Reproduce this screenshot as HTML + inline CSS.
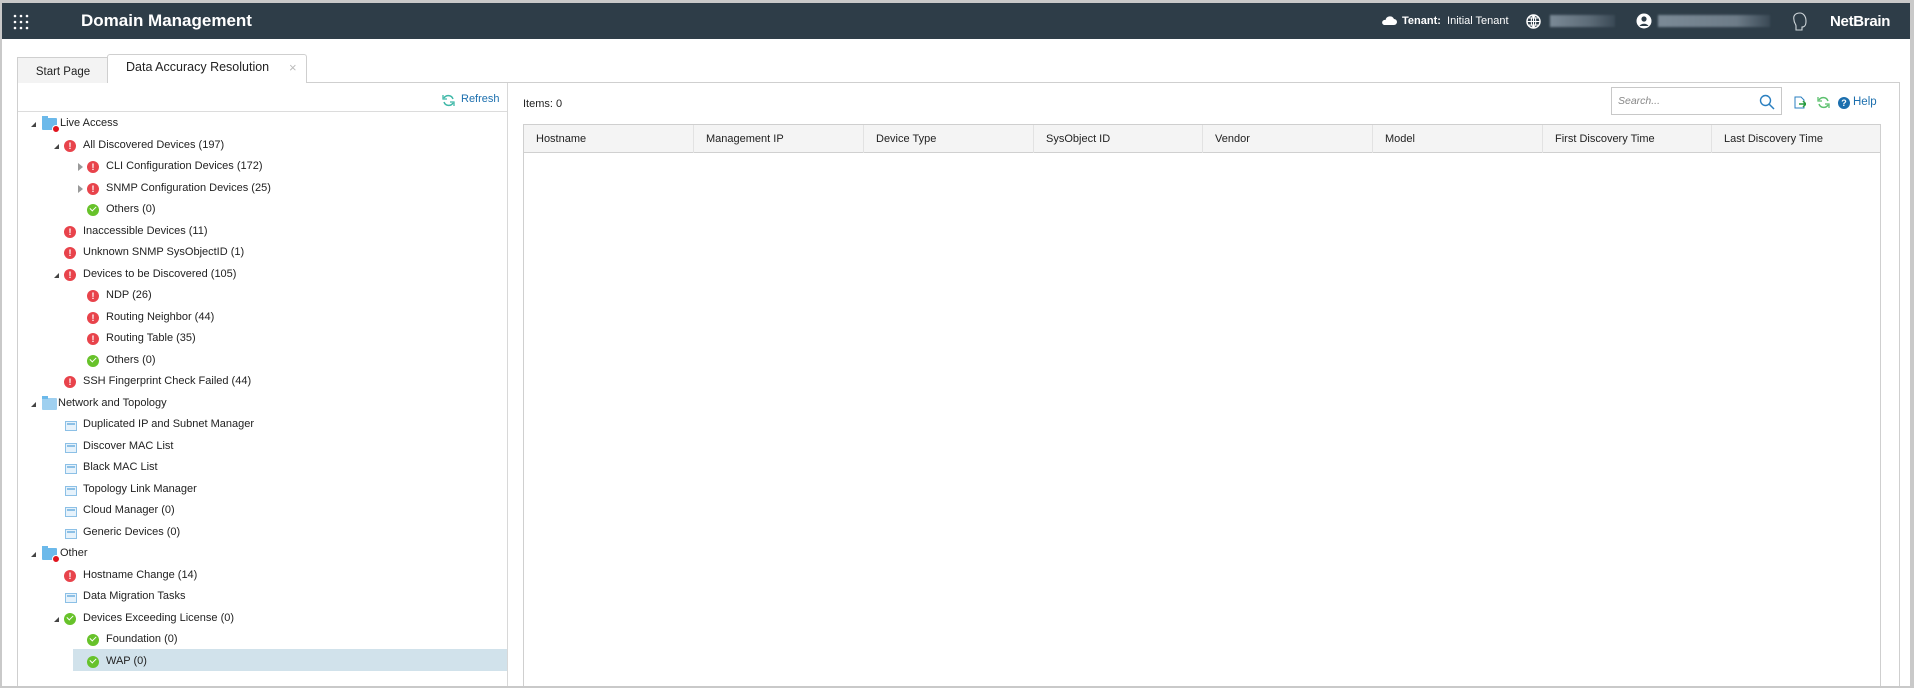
<!DOCTYPE html>
<html><head><meta charset="utf-8"><style>
*{box-sizing:border-box;margin:0;padding:0}
body{width:1914px;height:688px;overflow:hidden;background:#c9c9c9;font-family:"Liberation Sans",sans-serif;font-size:11px;color:#222;position:relative}
.abs{position:absolute}
#page{position:absolute;left:2px;top:3px;width:1908px;height:683px;background:#fff}
#hdr{position:absolute;left:0;top:0;width:1908px;height:36px;background:#2e3d48;color:#fff}
.row{position:absolute;height:21.5px;line-height:21.5px;white-space:nowrap}
.err{display:inline-block;width:12px;height:12px;border-radius:50%;background:#e8434b;color:#fff;font-size:9px;font-weight:bold;text-align:center;line-height:12px;position:absolute;top:5px;font-style:normal}
.ok{display:inline-block;width:12px;height:12px;border-radius:50%;background:#67c22a;position:absolute;top:5px}
.ok:after{content:"";position:absolute;left:3px;top:2px;width:5px;height:3px;border-left:1.6px solid #fff;border-bottom:1.6px solid #fff;transform:rotate(-45deg)}
.tbl{display:inline-block;width:12px;height:10px;border:1px solid #8cc0e6;background:#e6f2fb;position:absolute;top:7px}
.tbl:after{content:"";position:absolute;left:1px;right:1px;top:1px;height:2px;background:#8cc0e6}
.tri{position:absolute;top:9px;width:0;height:0;border-left:5px solid transparent;border-bottom:5px solid #444}
.trio{position:absolute;top:7px;width:0;height:0;border-top:4px solid transparent;border-bottom:4px solid transparent;border-left:5px solid #999}
.fold{position:absolute;top:5px;width:15px;height:12px;background:#6cb9ea;border-radius:1px}
.fold:before{content:"";position:absolute;left:0;top:-2px;width:6px;height:3px;background:#6cb9ea}
.fb{position:absolute;right:-3px;bottom:-3px;width:8px;height:8px;border-radius:50%;background:#e0141e;border:1px solid #fff}
.th{position:absolute;top:0;height:28px;line-height:28px;padding-left:12px;border-right:1px solid #e2e2e2;color:#222}
</style></head><body>
<div id="page">
<div id="hdr">
 <svg class="abs" style="left:11px;top:11px" width="16" height="16"><g fill="#fff"><circle cx="2" cy="2" r="1.3"/><circle cx="8" cy="2" r="1.3"/><circle cx="14" cy="2" r="1.3"/><circle cx="2" cy="8" r="1.3"/><circle cx="8" cy="8" r="1.3"/><circle cx="14" cy="8" r="1.3"/><circle cx="2" cy="14" r="1.3"/><circle cx="8" cy="14" r="1.3"/><circle cx="14" cy="14" r="1.3"/></g></svg>
 <div class="abs" style="left:79px;top:8px;font-size:17px;font-weight:bold">Domain Management</div>
 <svg class="abs" style="left:1379px;top:12px" width="16" height="11"><path d="M3 10h10a3 3 0 0 0 0-6 4.5 4.5 0 0 0-8.5 1A2.5 2.5 0 0 0 3 10z" fill="#fff"/></svg>
 <div class="abs" style="left:1400px;top:12px;font-size:11px"><b>Tenant:</b>&nbsp; Initial Tenant</div>
 <svg class="abs" style="left:1524px;top:11px" width="15" height="15"><circle cx="7.5" cy="7.5" r="6.5" fill="none" stroke="#fff" stroke-width="1.5"/><path d="M1 7.5h13M7.5 1v13M3 4h9M3 11h9M7.5 1c-3 3-3 10 0 13M7.5 1c3 3 3 10 0 13" stroke="#fff" fill="none"/></svg>
 <div class="abs" style="left:1548px;top:12px;width:65px;height:12px;background:linear-gradient(90deg,#7b8a96,#5d6c78 60%,#3a4955);filter:blur(1px)"></div>
 <svg class="abs" style="left:1634px;top:10px" width="16" height="16"><circle cx="8" cy="8" r="7.5" fill="#fff"/><circle cx="8" cy="6" r="2.6" fill="#2e3d48"/><path d="M3.5 13a5 4 0 0 1 9 0" fill="#2e3d48"/></svg>
 <div class="abs" style="left:1656px;top:12px;width:112px;height:12px;background:linear-gradient(90deg,#7b8a96,#6d7c88 70%,#3a4955);filter:blur(1px)"></div>
 <svg class="abs" style="left:1790px;top:9px" width="16" height="20"><path d="M8 1C3 1 1 4 2 8c0 3 2 4 2 6v4h6v-3c3 0 4-2 4-6 0-5-3-8-6-8z" fill="none" stroke="#cfd6da" stroke-width="1.1"/></svg>
 <div class="abs" style="left:1828px;top:10px;font-size:15px;font-weight:bold;letter-spacing:-0.3px">NetBrain</div>
</div>

<div class="abs" style="left:15px;top:54px;width:92px;height:26px;background:#f3f3f3;border:1px solid #cfcfcf;border-bottom:none;text-align:center;line-height:28px;font-size:11.5px">Start Page</div>
<div class="abs" style="left:105px;top:51px;width:200px;height:29px;background:#fff;border:1px solid #cfcfcf;border-bottom:none;border-radius:3px 3px 0 0;line-height:24px;padding-left:18px;font-size:12.5px">Data Accuracy Resolution<span style="position:absolute;left:181px;top:1px;color:#bbb;font-size:13px">×</span></div>
<div class="abs" style="left:304px;top:79px;width:1594px;height:1px;background:#cfcfcf"></div>
<div class="abs" style="left:15px;top:80px;width:1px;height:603px;background:#cfcfcf"></div>
<div class="abs" style="left:1897px;top:79px;width:1px;height:604px;background:#cfcfcf"></div>
<div class="abs" style="left:505px;top:80px;width:1px;height:603px;background:#d8d8d8"></div>
<svg class="abs" style="left:440px;top:91px" width="13" height="13"><path d="M11 5A5 5 0 0 0 2 4M2 8a5 5 0 0 0 9 1" fill="none" stroke="#3fb8a8" stroke-width="1.5"/><path d="M1 1v4h4" fill="none" stroke="#3fb8a8" stroke-width="1.3"/><path d="M12 12V8H8" fill="none" stroke="#3fb8a8" stroke-width="1.3"/></svg>
<div class="abs" style="left:459px;top:90px;color:#1c6fae;font-size:11px">Refresh</div>
<div class="abs" style="left:16px;top:108px;width:489px;height:1px;background:#dcdcdc"></div>
<div class="abs" style="left:71px;top:646px;width:434px;height:22px;background:#d1e2eb"></div>

<div id="tree" class="abs" style="left:-2px;top:-2px">
<div class="row" style="top:112px;left:0"><i class="tri" style="left:31px"></i><i class="fold" style="left:42px"><i class="fb"></i></i><span style="position:absolute;left:60px">Live Access</span></div>
<div class="row" style="top:133.5px;left:0"><i class="tri" style="left:54px"></i><i class="err" style="left:64px">!</i><span style="position:absolute;left:83px">All Discovered Devices (197)</span></div>
<div class="row" style="top:155px;left:0"><i class="trio" style="left:78px"></i><i class="err" style="left:87px">!</i><span style="position:absolute;left:106px">CLI Configuration Devices (172)</span></div>
<div class="row" style="top:176.5px;left:0"><i class="trio" style="left:78px"></i><i class="err" style="left:87px">!</i><span style="position:absolute;left:106px">SNMP Configuration Devices (25)</span></div>
<div class="row" style="top:198px;left:0"><i class="ok" style="left:87px"></i><span style="position:absolute;left:106px">Others (0)</span></div>
<div class="row" style="top:219.5px;left:0"><i class="err" style="left:64px">!</i><span style="position:absolute;left:83px">Inaccessible Devices (11)</span></div>
<div class="row" style="top:241px;left:0"><i class="err" style="left:64px">!</i><span style="position:absolute;left:83px">Unknown SNMP SysObjectID (1)</span></div>
<div class="row" style="top:262.5px;left:0"><i class="tri" style="left:54px"></i><i class="err" style="left:64px">!</i><span style="position:absolute;left:83px">Devices to be Discovered (105)</span></div>
<div class="row" style="top:284px;left:0"><i class="err" style="left:87px">!</i><span style="position:absolute;left:106px">NDP (26)</span></div>
<div class="row" style="top:305.5px;left:0"><i class="err" style="left:87px">!</i><span style="position:absolute;left:106px">Routing Neighbor (44)</span></div>
<div class="row" style="top:327px;left:0"><i class="err" style="left:87px">!</i><span style="position:absolute;left:106px">Routing Table (35)</span></div>
<div class="row" style="top:348.5px;left:0"><i class="ok" style="left:87px"></i><span style="position:absolute;left:106px">Others (0)</span></div>
<div class="row" style="top:370px;left:0"><i class="err" style="left:64px">!</i><span style="position:absolute;left:83px">SSH Fingerprint Check Failed (44)</span></div>
<div class="row" style="top:391.5px;left:0"><i class="tri" style="left:31px"></i><i class="fold" style="left:42px;background:#9fd0f0"></i><span style="position:absolute;left:58px">Network and Topology</span></div>
<div class="row" style="top:413px;left:0"><i class="tbl" style="left:65px"></i><span style="position:absolute;left:83px">Duplicated IP and Subnet Manager</span></div>
<div class="row" style="top:434.5px;left:0"><i class="tbl" style="left:65px"></i><span style="position:absolute;left:83px">Discover MAC List</span></div>
<div class="row" style="top:456px;left:0"><i class="tbl" style="left:65px"></i><span style="position:absolute;left:83px">Black MAC List</span></div>
<div class="row" style="top:477.5px;left:0"><i class="tbl" style="left:65px"></i><span style="position:absolute;left:83px">Topology Link Manager</span></div>
<div class="row" style="top:499px;left:0"><i class="tbl" style="left:65px"></i><span style="position:absolute;left:83px">Cloud Manager (0)</span></div>
<div class="row" style="top:520.5px;left:0"><i class="tbl" style="left:65px"></i><span style="position:absolute;left:83px">Generic Devices (0)</span></div>
<div class="row" style="top:542px;left:0"><i class="tri" style="left:31px"></i><i class="fold" style="left:42px"><i class="fb"></i></i><span style="position:absolute;left:60px">Other</span></div>
<div class="row" style="top:563.5px;left:0"><i class="err" style="left:64px">!</i><span style="position:absolute;left:83px">Hostname Change (14)</span></div>
<div class="row" style="top:585px;left:0"><i class="tbl" style="left:65px"></i><span style="position:absolute;left:83px">Data Migration Tasks</span></div>
<div class="row" style="top:606.5px;left:0"><i class="tri" style="left:54px"></i><i class="ok" style="left:64px"></i><span style="position:absolute;left:83px">Devices Exceeding License (0)</span></div>
<div class="row" style="top:628px;left:0"><i class="ok" style="left:87px"></i><span style="position:absolute;left:106px">Foundation (0)</span></div>
<div class="row" style="top:649.5px;left:0"><i class="ok" style="left:87px"></i><span style="position:absolute;left:106px">WAP (0)</span></div>
</div>

<div class="abs" style="left:521px;top:95px">Items: 0</div>
<div class="abs" style="left:1609px;top:84px;width:171px;height:28px;border:1px solid #c8c8c8;background:#fff"><span style="position:absolute;left:6px;top:7px;color:#888;font-style:italic;font-size:10.5px">Search...</span>
<svg class="abs" style="left:147px;top:6px" width="16" height="16"><circle cx="6.5" cy="6.5" r="5" fill="none" stroke="#2a7fc0" stroke-width="1.4"/><path d="M10 10l5 5" stroke="#2a7fc0" stroke-width="1.5"/></svg></div>
<svg class="abs" style="left:1792px;top:93px" width="12" height="13"><path d="M1 1h6l3 3v8H1z" fill="#fff" stroke="#2a7fc0"/><path d="M5 8h7M9 5l3 3-3 3" stroke="#2a9d3c" stroke-width="1.5" fill="none"/></svg>
<svg class="abs" style="left:1815px;top:93px" width="13" height="13"><path d="M11 5A5 5 0 0 0 2 4M2 8a5 5 0 0 0 9 1" fill="none" stroke="#5cc06e" stroke-width="1.5"/><path d="M1 1v4h4M12 12V8H8" fill="none" stroke="#5cc06e" stroke-width="1.3"/></svg>
<div class="abs" style="left:1836px;top:94px;width:12px;height:12px;border-radius:50%;background:#1c6fae;color:#fff;font-size:9px;font-weight:bold;text-align:center;line-height:12px">?</div>
<div class="abs" style="left:1851px;top:93px;color:#1c6fae;font-size:11.5px">Help</div>
<div class="abs" style="left:521px;top:121px;width:1358px;height:562px;border:1px solid #cfcfcf;border-bottom:none">
 <div class="abs" style="left:0;top:0;width:1356px;height:28px;background:#f4f4f4;border-bottom:1px solid #d0d0d0">
  <div class="th" style="left:0;width:170px">Hostname</div>
  <div class="th" style="left:170px;width:170px">Management IP</div>
  <div class="th" style="left:340px;width:170px">Device Type</div>
  <div class="th" style="left:510px;width:169px">SysObject ID</div>
  <div class="th" style="left:679px;width:170px">Vendor</div>
  <div class="th" style="left:849px;width:170px">Model</div>
  <div class="th" style="left:1019px;width:169px">First Discovery Time</div>
  <div class="th" style="left:1188px;width:168px;border-right:none">Last Discovery Time</div>
 </div>
</div>
</div>
</body></html>
